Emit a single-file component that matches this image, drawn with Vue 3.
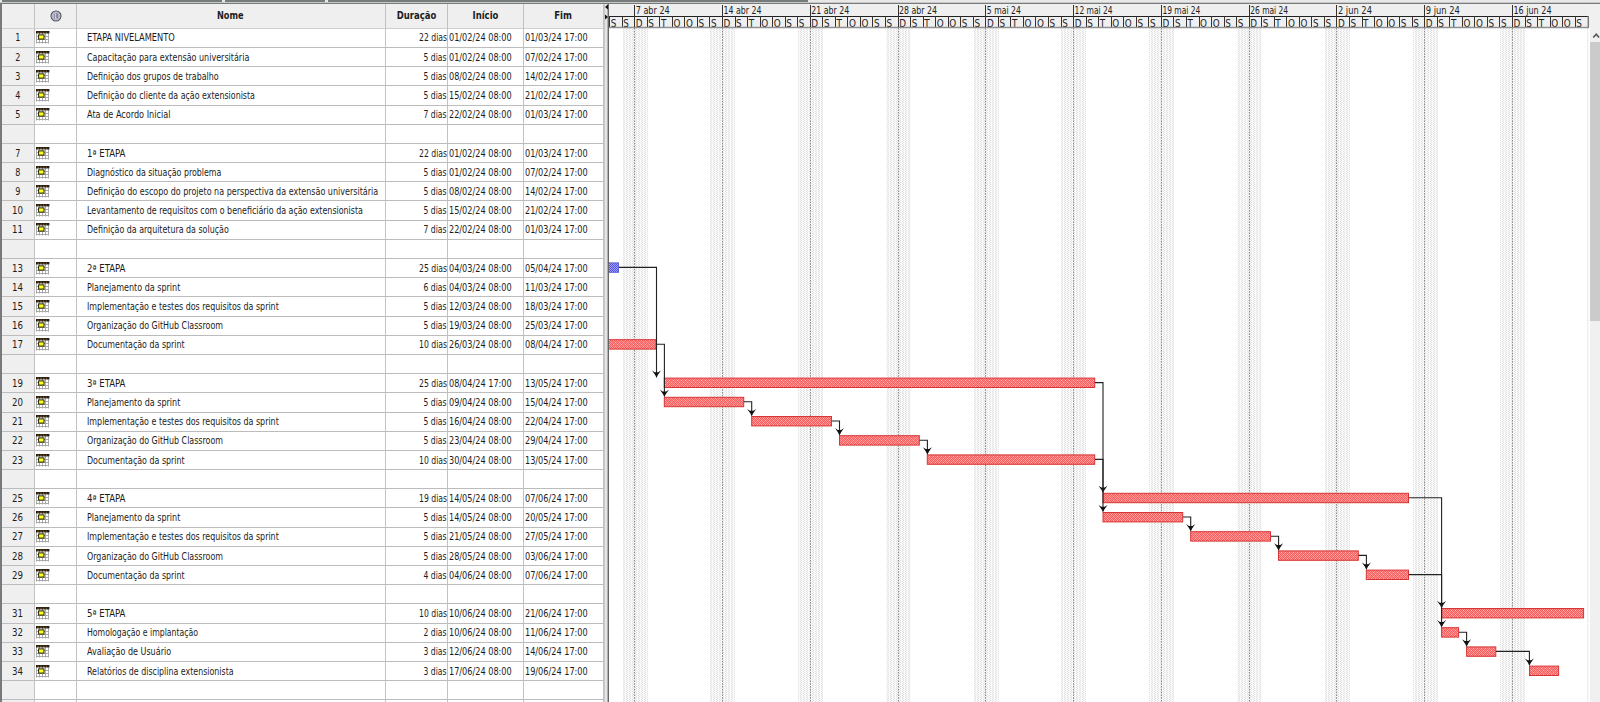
<script setup>
const names = {
  1: ['ETAPA NIVELAMENTO', 88, '22', '01/02/24 08:00', '01/03/24 17:00'],
  2: ['Capacitação para extensão universitária', 162, '5', '01/02/24 08:00', '07/02/24 17:00'],
  3: ['Definição dos grupos de trabalho', 132, '5', '08/02/24 08:00', '14/02/24 17:00'],
  4: ['Definição do cliente da ação extensionista', 168, '5', '15/02/24 08:00', '21/02/24 17:00'],
  5: ['Ata de Acordo Inicial', 83, '7', '22/02/24 08:00', '01/03/24 17:00'],
  7: ['1ª ETAPA', 39, '22', '01/02/24 08:00', '01/03/24 17:00'],
  8: ['Diagnóstico da situação problema', 134, '5', '01/02/24 08:00', '07/02/24 17:00'],
  9: ['Definição do escopo do projeto na perspectiva da extensão universitária', 291, '5', '08/02/24 08:00', '14/02/24 17:00'],
  10: ['Levantamento de requisitos com o beneficiário da ação extensionista', 276, '5', '15/02/24 08:00', '21/02/24 17:00'],
  11: ['Definição da arquitetura da solução', 142, '7', '22/02/24 08:00', '01/03/24 17:00'],
  13: ['2ª ETAPA', 39, '25', '04/03/24 08:00', '05/04/24 17:00'],
  14: ['Planejamento da sprint', 93, '6', '04/03/24 08:00', '11/03/24 17:00'],
  15: ['Implementação e testes dos requisitos da sprint', 192, '5', '12/03/24 08:00', '18/03/24 17:00'],
  16: ['Organização do GitHub Classroom', 136, '5', '19/03/24 08:00', '25/03/24 17:00'],
  17: ['Documentação da sprint', 98, '10', '26/03/24 08:00', '08/04/24 17:00'],
  19: ['3ª ETAPA', 39, '25', '08/04/24 17:00', '13/05/24 17:00'],
  20: ['Planejamento da sprint', 93, '5', '09/04/24 08:00', '15/04/24 17:00'],
  21: ['Implementação e testes dos requisitos da sprint', 192, '5', '16/04/24 08:00', '22/04/24 17:00'],
  22: ['Organização do GitHub Classroom', 136, '5', '23/04/24 08:00', '29/04/24 17:00'],
  23: ['Documentação da sprint', 98, '10', '30/04/24 08:00', '13/05/24 17:00'],
  25: ['4ª ETAPA', 39, '19', '14/05/24 08:00', '07/06/24 17:00'],
  26: ['Planejamento da sprint', 93, '5', '14/05/24 08:00', '20/05/24 17:00'],
  27: ['Implementação e testes dos requisitos da sprint', 192, '5', '21/05/24 08:00', '27/05/24 17:00'],
  28: ['Organização do GitHub Classroom', 136, '5', '28/05/24 08:00', '03/06/24 17:00'],
  29: ['Documentação da sprint', 98, '4', '04/06/24 08:00', '07/06/24 17:00'],
  31: ['5ª ETAPA', 39, '10', '10/06/24 08:00', '21/06/24 17:00'],
  32: ['Homologação e implantação', 111, '2', '10/06/24 08:00', '11/06/24 17:00'],
  33: ['Avaliação de Usuário', 84, '3', '12/06/24 08:00', '14/06/24 17:00'],
  34: ['Relatórios de disciplina extensionista', 147, '3', '17/06/24 08:00', '19/06/24 17:00'],
}
const rows = Array.from({ length: 36 }, (_, i) => {
  const t = names[i + 1]
  return t ? { id: i + 1, name: t[0], w: t[1], dur: t[2] + ' dias', start: t[3], end: t[4] } : { id: i + 1 }
})

const vFit = {
  mounted(el, { value }) {
    el.style.transform = `scaleX(${value / el.offsetWidth})`
  },
}

const DAY = 12.54
const SUNDAY = 634.5
const weeks = ['7 abr 24', '14 abr 24', '21 abr 24', '28 abr 24', '5 mai 24', '12 mai 24', '19 mai 24', '26 mai 24', '2 jun 24', '9 jun 24', '16 jun 24']
  .map((label, i) => ({ label, x: SUNDAY + i * DAY * 7 }))
const letters = ['D', 'S', 'T', 'O', 'O', 'S', 'S']
const days = Array.from({ length: 78 }, (_, i) => ({
  x: SUNDAY + (i - 2) * DAY,
  label: letters[(i + 5) % 7],
}))

const barY = (row) => 28.5 + (row - 1) * 19.2 + 4
const bars = [
  [13, 605, 618.5, 'blue'], [17, 605, 656], [19, 664.3, 1094.7], [20, 664.3, 743.7],
  [21, 751.7, 831.5], [22, 839.5, 919.3], [23, 927.3, 1094.7], [25, 1103, 1408.5],
  [26, 1103, 1182.7], [27, 1190.7, 1270.5], [28, 1278.5, 1358.3], [29, 1366.3, 1408.5],
  [31, 1441.6, 1583.6], [32, 1441.6, 1458.6], [33, 1466.6, 1495.8], [34, 1529.5, 1558.6],
].map(([r, a, b, c]) => ({ x: a, w: b - a, y: barY(r), color: c || 'red' }))

// [from row, from x, to x, to row]
const links = [
  [13, 619, 656.5, 19], [17, 656.5, 664.4, 20], [20, 744, 751.7, 21], [21, 832, 839.5, 22],
  [22, 919.5, 927.4, 23], [19, 1095, 1103, 25], [23, 1095, 1103, 26], [26, 1183, 1190.7, 27],
  [27, 1271, 1278.6, 28], [28, 1358.6, 1366.4, 29], [25, 1409, 1441.6, 31], [29, 1409, 1441.6, 32],
  [32, 1459, 1466.6, 33], [33, 1496, 1529.4, 34],
].map(([r, a, b, t]) => ({
  d: `M${a} ${barY(r) + 4.5}H${b}V${barY(t) - 2}`,
  x: b,
  y: barY(t),
}))
</script>

<template>
  <div class="window">
    <div class="frame-top"><i></i><i></i><span></span></div>
    <div class="body">
      <section class="sheet">
        <div class="row head">
          <div class="cell num"></div>
          <div class="cell info">
            <svg width="12" height="12" viewBox="0 0 12 12">
              <circle cx="6" cy="6" r="5" fill="#b9b9d0" stroke="#55555f" stroke-width="1.1" />
              <path d="M4.6 3.8v4.8M6.2 3v5M7.6 3.6v4.8" stroke="#77778f" stroke-width=".9" />
              <path d="M5.4 3.4v5" stroke="#e6e6f4" stroke-width=".7" />
            </svg>
          </div>
          <div class="cell"><b v-fit="27">Nome</b></div>
          <div class="cell"><b v-fit="39.5">Duração</b></div>
          <div class="cell"><b v-fit="26">Início</b></div>
          <div class="cell"><b v-fit="17.5">Fim</b></div>
        </div>
        <div v-for="r in rows" :key="r.id" class="row">
          <div class="cell num"><span v-if="r.name" v-fit="r.id < 10 ? 5.5 : 10.8">{{ r.id }}</span></div>
          <div class="cell icon">
            <svg v-if="r.name" width="14" height="13" viewBox="0 0 14 13">
              <rect x=".5" y="1" width="13" height="11.5" fill="#fff" />
              <path d="M.5 2v10.5M3.5 2v10.5M6.5 2v10.5M9.5 2v10.5M12.5 2v10.5M0 5.5h13M0 8.5h13M0 11.5h13" stroke="#a2a2a2" stroke-width=".9" />
              <rect width="13.4" height="2.4" fill="#21190d" />
              <path d="M1.5 1.2h11" stroke="#a98449" stroke-width=".7" stroke-dasharray="1.5 1.2" />
              <rect x="2.6" y="3.9" width="5.4" height="4.2" fill="#ffff28" stroke="#222200" stroke-width="1" />
            </svg>
          </div>
          <div class="cell name"><span v-if="r.name" v-fit="r.w">{{ r.name }}</span></div>
          <div class="cell dur"><span v-if="r.name" v-fit="r.dur.length > 6 ? 28 : 22.6">{{ r.dur }}</span></div>
          <div class="cell date"><span v-if="r.name" v-fit="62.9">{{ r.start }}</span></div>
          <div class="cell date"><span v-if="r.name" v-fit="62.9">{{ r.end }}</span></div>
        </div>
      </section>

      <div class="splitter">
        <svg width="5" height="24" viewBox="0 0 5 24">
          <path d="M4 0.5v5L1 3zM1 10.5v5L4 13z" fill="#111" />
        </svg>
      </div>

      <svg class="chart" width="981" height="698" viewBox="609 4 981 698">
        <defs>
          <pattern id="red" width="4" height="4" patternUnits="userSpaceOnUse">
            <rect width="4" height="4" fill="#ff8a8a" />
            <path d="M0 0h1v1H0zM2 0h1v1H2zM1 1h1v1H1zM3 1h1v1H3zM0 2h1v1H0zM2 2h1v1H2zM1 3h1v1H1zM3 3h1v1H3z" fill="#f66060" />
            <path d="M1 0h1v1H1zM3 2h1v1H3z" fill="#ffbcbc" />
          </pattern>
          <pattern id="blue" width="2" height="2" patternUnits="userSpaceOnUse">
            <rect width="2" height="2" fill="#a4a4ff" />
            <path d="M0 0h1v1H0zM1 1h1v1H1z" fill="#5050ec" />
          </pattern>
          <pattern id="dots" width="3" height="4" patternUnits="userSpaceOnUse">
            <rect width="3" height="4" fill="#fafafa" />
            <path d="M0 0h1v1H0zM0 2h1v1H0zM2 1h1v1H2zM2 3h1v1H2z" fill="#e0e0e0" />
          </pattern>
        </defs>
        <rect x="609" y="28" width="981" height="674" fill="#fff" />
        <rect v-for="w in weeks" :key="w.x" :x="Math.round(w.x - 12)" y="28" width="25" height="674" fill="url(#dots)" />
        <rect x="1587" y="28" width="2" height="674" fill="url(#dots)" />
        <path v-for="w in weeks" :key="'l' + w.x" :d="`M${Math.round(w.x - 0.3) + 0.5} 28V702`" class="weekline" />

        <rect x="609" y="4" width="981" height="24" fill="#efefef" />
        <path d="M609 16.5H1588.5" stroke="#222" />
        <path v-for="d in days" :key="d.x" :d="`M${Math.round(d.x - 0.3) + 0.5} 16V27`" stroke="#333" />
        <path d="M1588.3 16V28" stroke="#777" stroke-width="1.4" />
        <text v-for="d in days" :key="'t' + d.x" :x="d.x + 1.3" y="27" class="scale">{{ d.label }}</text>
        <path d="M609 27.5H1588.5" stroke="#909090" stroke-width="1.4" />
        <template v-for="w in weeks" :key="'w' + w.x">
          <path :d="`M${Math.round(w.x - 0.3) + 0.5} 5V27`" stroke="#333" />
          <text :x="w.x + 1.2" y="14" class="scale" :textLength="w.label.length > 8 ? 38 : 34" lengthAdjust="spacingAndGlyphs">{{ w.label }}</text>
        </template>

        <rect v-for="(b, i) in bars" :key="'b' + i" :x="b.x" :y="b.y" :width="b.w" height="9.4" :fill="`url(#${b.color})`" :class="['bar', b.color]" />
        <g v-for="(l, i) in links" :key="'k' + i">
          <path :d="l.d" class="link" />
          <path :d="`M${l.x - 4.5} ${l.y - 7.6}l2.8 1.8h3.4l2.8 -1.8l-3.2 4.6l-1.3 3l-1.3 -3z`" fill="#111" />
        </g>
      </svg>

      <div class="scrollbar">
        <svg width="10" height="14" viewBox="0 0 10 14"><path d="M3.3 9.5l2.9 -3.2l2.9 3.2" fill="none" stroke="#555" stroke-width="1.6" /></svg>
        <div class="thumb"></div>
      </div>
    </div>
  </div>
</template>

<style>
body { margin: 0; overflow: hidden; }
</style>

<style scoped>
.window {
  width: 1600px;
  height: 702px;
  overflow: hidden;
  background: #efefef;
  color: #1c1c1c;
  font: 9.8px/12px "DejaVu Sans Condensed", "DejaVu Sans", Tahoma, sans-serif;
}
.frame-top {
  display: flex;
  height: 1.5px;
  padding: 0 0 0 2px;
  gap: 3px;
  background: #e8e8e8;
  border-bottom: 1px solid #c9c9c9;
  box-shadow: 0 1.5px 0 #777b7c;
  margin-bottom: 1.5px;
}
.frame-top i { width: 220px; background: #777b7c; }
.frame-top i + i { width: 100px; }
.frame-top span { width: 480px; background: #777b7c; }
.body { display: flex; height: 698px; }
.sheet {
  width: 602px;
  height: 698px;
  overflow: hidden;
  border-left: 2px solid #77797c;
  background: #fff;
}
.row {
  display: grid;
  grid-template-columns: 33px 42px 308.5px 62.5px 76px 80px;
  height: 19.2px;
}
.row.head { height: 24.8px; }
.cell {
  display: flex;
  align-items: center;
  box-sizing: border-box;
  padding-top: 1.2px;
  border-right: 1px solid #c2c2c2;
  border-bottom: 1px solid #bcbcbc;
  white-space: nowrap;
}
.cell span { display: block; flex: none; transform-origin: left; }
.head .cell { justify-content: center; background: #efefef; border-bottom-color: #cfcfcf; }
.head b { flex: none; display: block; }
.cell.num { justify-content: center; background: #efefef; }
.cell.num span { transform-origin: center; }
.cell.icon { padding: 0 0 0 1px; }
.cell.name { padding-left: 9.6px; }
.cell.dur { justify-content: flex-end; padding-right: .4px; }
.cell.dur span { transform-origin: right; }
.cell.date { padding-left: .5px; }
.splitter {
  width: 5px;
  box-sizing: border-box;
  background: linear-gradient(90deg, #c9c9cb 0 1px, #e4e4e8 1px 3px, #b0b0b4 3px 4px, #666 4px);
}
.splitter svg { display: block; }
.chart { display: block; flex: none; }
.scale { font-size: 9.8px; fill: #222; }
.weekline { stroke: #8c8c8c; stroke-width: 1; stroke-dasharray: 1.6 1.2; }
.bar { stroke-width: 1; }
.bar.red { stroke: #d83434; }
.bar.blue { stroke: #6060dd; }
.link { fill: none; stroke: #222; stroke-width: 1.1; }
.scrollbar { width: 10px; padding-top: 24px; background: #f0f0f0; }
.scrollbar svg { display: block; }
.thumb { height: 279px; background: #cbcbcb; }
</style>
